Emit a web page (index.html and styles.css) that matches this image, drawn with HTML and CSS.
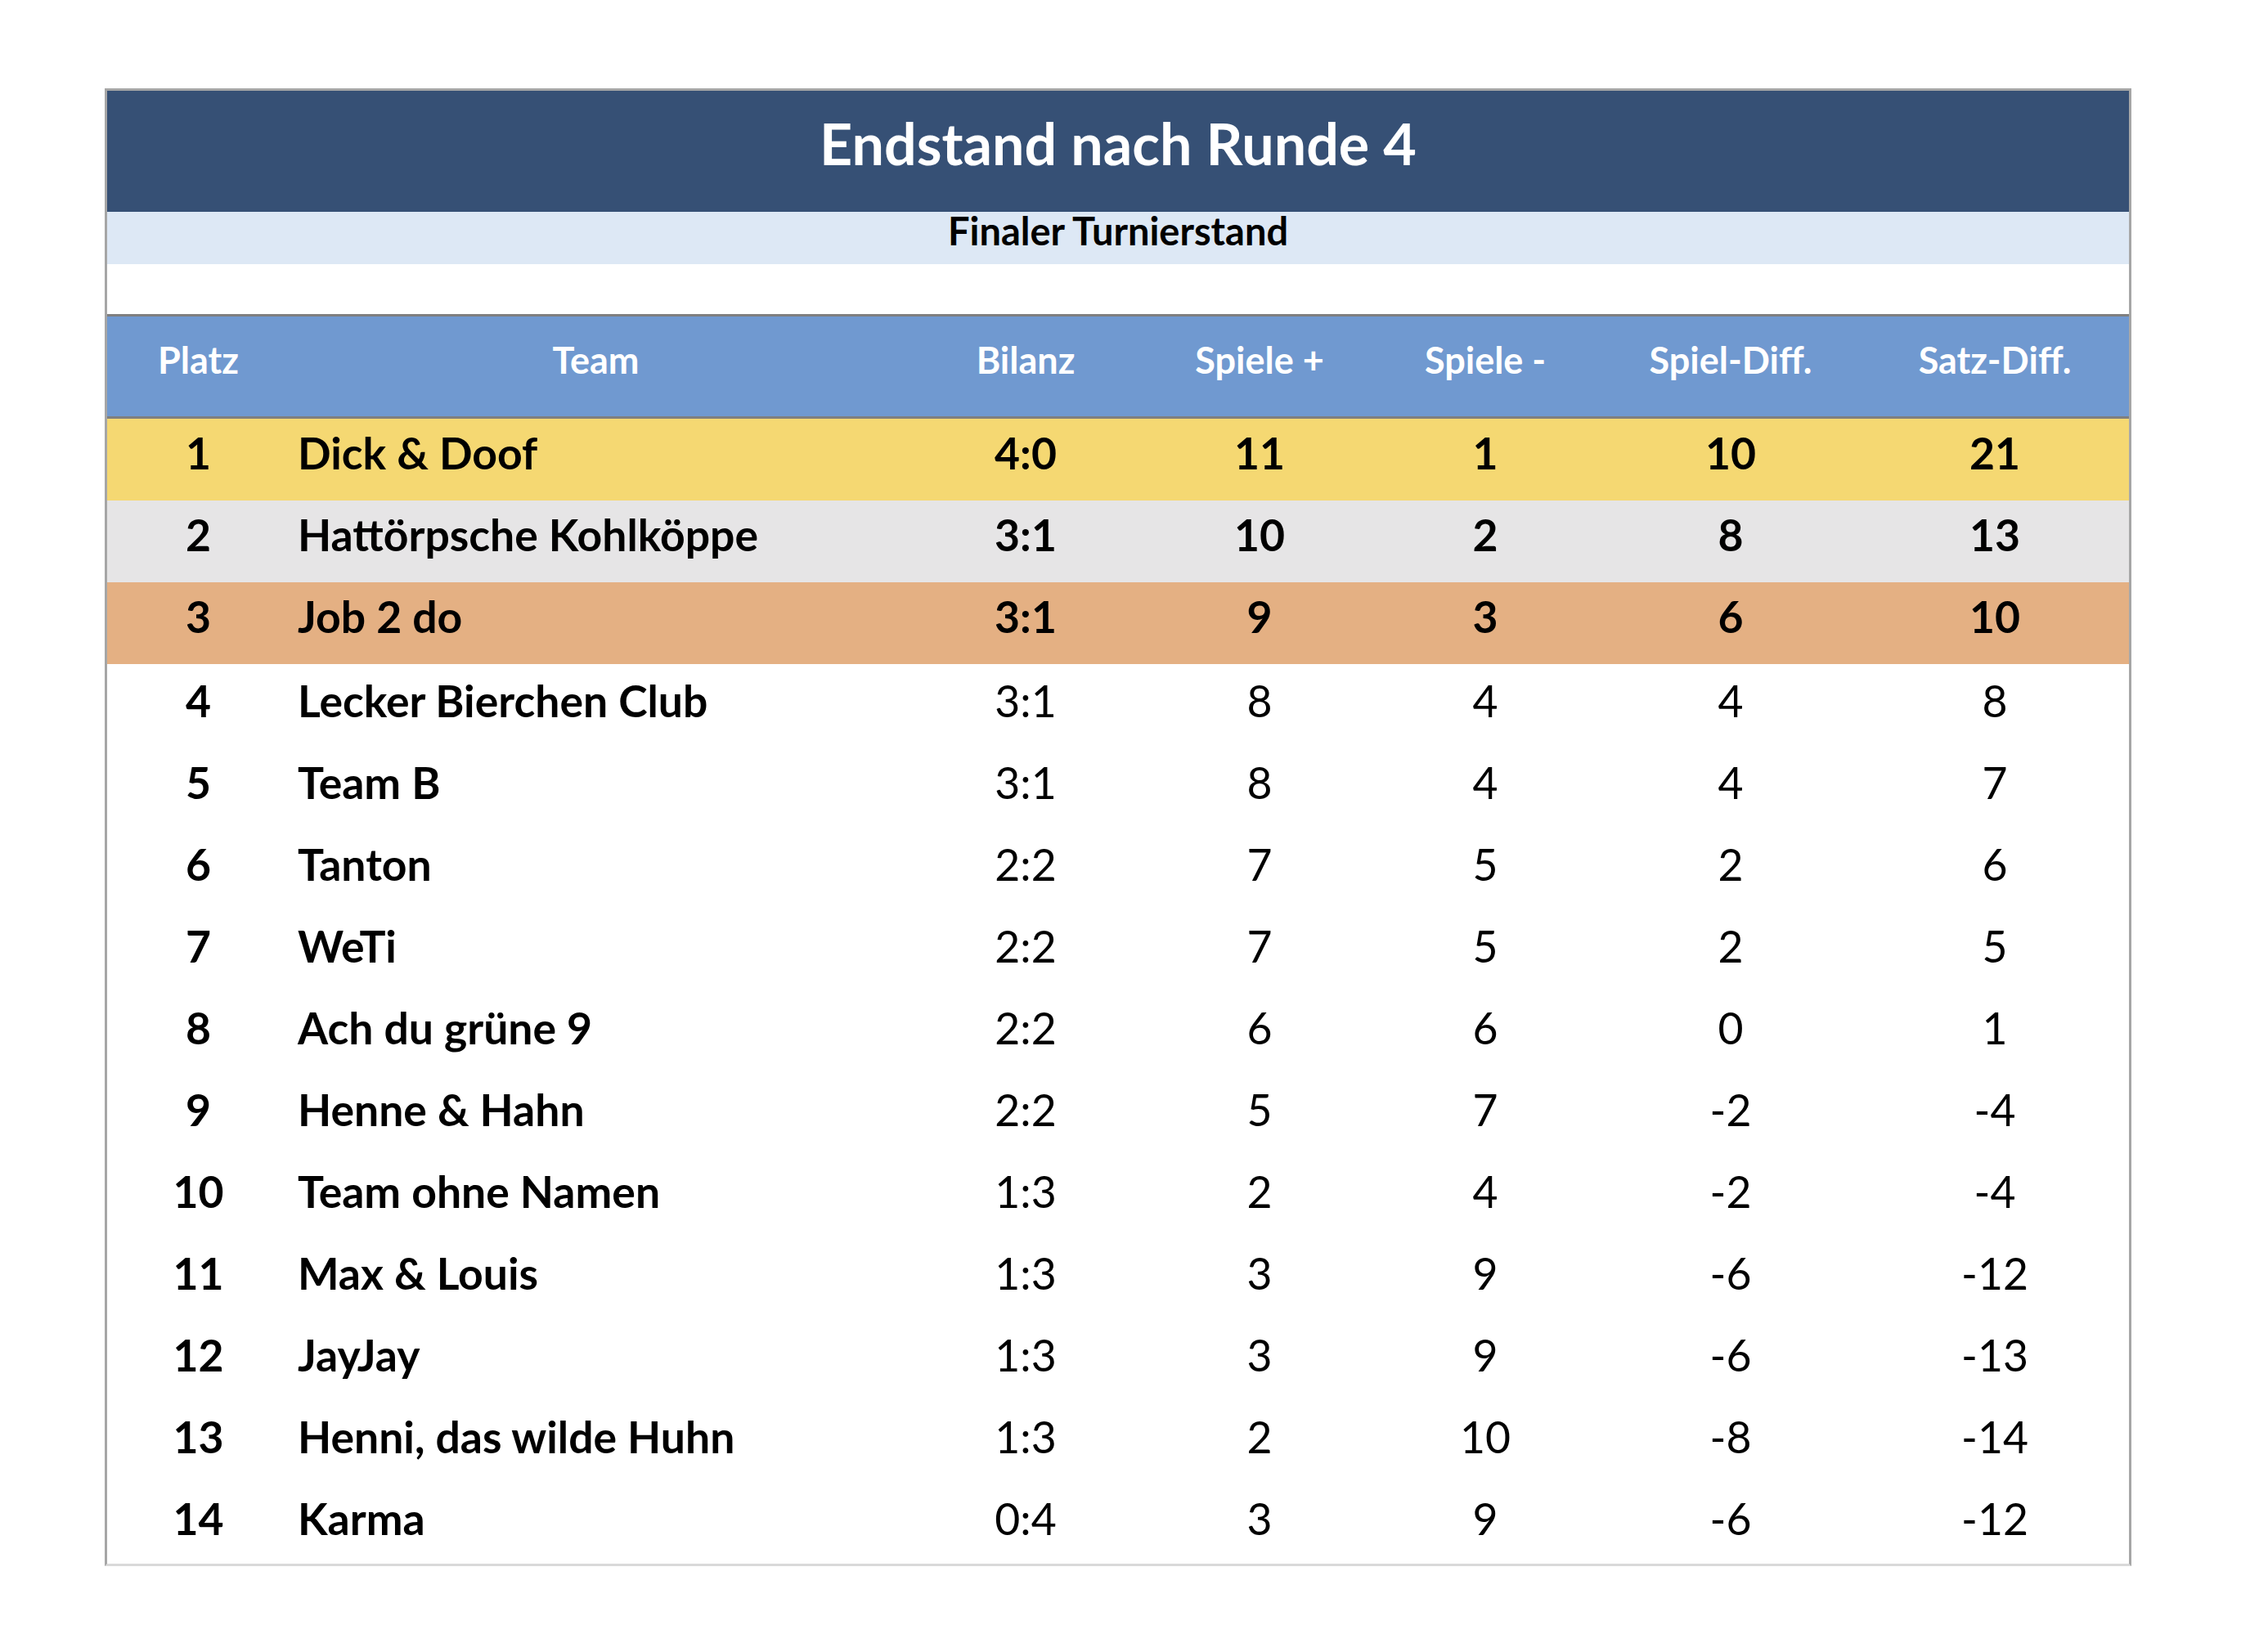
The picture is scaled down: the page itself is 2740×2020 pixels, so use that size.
FILE: index.html
```html
<!DOCTYPE html>
<html lang="de">
<head>
<meta charset="utf-8">
<title>Endstand nach Runde 4</title>
<link rel="stylesheet" href="styles.css">
</head>
<body>
<div class="sheet">
  <div class="title">Endstand nach Runde 4</div>
  <div class="subtitle">Finaler Turnierstand</div>
  <div class="spacer"></div>
  <div class="head row-grid">
    <div class="c">Platz</div>
    <div class="c">Team</div>
    <div class="c">Bilanz</div>
    <div class="c">Spiele +</div>
    <div class="c">Spiele -</div>
    <div class="c">Spiel-Diff.</div>
    <div class="c">Satz-Diff.</div>
  </div>
  <div class="body">
    <div class="row row-grid podium gold"><div class="c">1</div><div class="c team">Dick &amp; Doof</div><div class="c num">4:0</div><div class="c num">11</div><div class="c num">1</div><div class="c num">10</div><div class="c num">21</div></div>
    <div class="row row-grid podium silver"><div class="c">2</div><div class="c team">Hattörpsche Kohlköppe</div><div class="c num">3:1</div><div class="c num">10</div><div class="c num">2</div><div class="c num">8</div><div class="c num">13</div></div>
    <div class="row row-grid podium bronze"><div class="c">3</div><div class="c team">Job 2 do</div><div class="c num">3:1</div><div class="c num">9</div><div class="c num">3</div><div class="c num">6</div><div class="c num">10</div></div>
    <div class="row row-grid"><div class="c">4</div><div class="c team">Lecker Bierchen Club</div><div class="c num">3:1</div><div class="c num">8</div><div class="c num">4</div><div class="c num">4</div><div class="c num">8</div></div>
    <div class="row row-grid"><div class="c">5</div><div class="c team">Team B</div><div class="c num">3:1</div><div class="c num">8</div><div class="c num">4</div><div class="c num">4</div><div class="c num">7</div></div>
    <div class="row row-grid"><div class="c">6</div><div class="c team">Tanton</div><div class="c num">2:2</div><div class="c num">7</div><div class="c num">5</div><div class="c num">2</div><div class="c num">6</div></div>
    <div class="row row-grid"><div class="c">7</div><div class="c team">WeTi</div><div class="c num">2:2</div><div class="c num">7</div><div class="c num">5</div><div class="c num">2</div><div class="c num">5</div></div>
    <div class="row row-grid"><div class="c">8</div><div class="c team">Ach du grüne 9</div><div class="c num">2:2</div><div class="c num">6</div><div class="c num">6</div><div class="c num">0</div><div class="c num">1</div></div>
    <div class="row row-grid"><div class="c">9</div><div class="c team">Henne &amp; Hahn</div><div class="c num">2:2</div><div class="c num">5</div><div class="c num">7</div><div class="c num">-2</div><div class="c num">-4</div></div>
    <div class="row row-grid"><div class="c">10</div><div class="c team">Team ohne Namen</div><div class="c num">1:3</div><div class="c num">2</div><div class="c num">4</div><div class="c num">-2</div><div class="c num">-4</div></div>
    <div class="row row-grid"><div class="c">11</div><div class="c team">Max &amp; Louis</div><div class="c num">1:3</div><div class="c num">3</div><div class="c num">9</div><div class="c num">-6</div><div class="c num">-12</div></div>
    <div class="row row-grid"><div class="c">12</div><div class="c team">JayJay</div><div class="c num">1:3</div><div class="c num">3</div><div class="c num">9</div><div class="c num">-6</div><div class="c num">-13</div></div>
    <div class="row row-grid"><div class="c">13</div><div class="c team">Henni, das wilde Huhn</div><div class="c num">1:3</div><div class="c num">2</div><div class="c num">10</div><div class="c num">-8</div><div class="c num">-14</div></div>
    <div class="row row-grid"><div class="c">14</div><div class="c team">Karma</div><div class="c num">0:4</div><div class="c num">3</div><div class="c num">9</div><div class="c num">-6</div><div class="c num">-12</div></div>
  </div>
</div>
</body>
</html>
```
FILE: styles.css
```css
html, body {
  margin: 0;
  padding: 0;
  background: #ffffff;
}

body {
  font-family: Lato, "Open Sans", "Liberation Sans", sans-serif;
  color: #000000;
  padding: 108px 0 0 128px;
}

.sheet {
  width: 2472px;
  border-top: 3px solid #a6a6a6;
  border-left: 3px solid #a6a6a6;
  border-right: 3px solid #a6a6a6;
  border-bottom: 3px solid #d9d9d9;
}

.title {
  background: #365075;
  color: #ffffff;
  font-weight: 700;
  font-size: 70px;
  line-height: 84px;
  height: 84px;
  padding: 22px 0 42px;
  text-align: center;
}

.subtitle {
  background: #dde8f5;
  font-weight: 700;
  font-size: 47px;
  line-height: 47px;
  height: 47px;
  padding: 0 0 17px;
  text-align: center;
}

.spacer {
  height: 61px;
  background: #ffffff;
}

.row-grid {
  display: grid;
  grid-template-columns: 223px 749px 302px 270px 282px 318px 328px;
}

.head {
  background: #7099d0;
  color: #ffffff;
  font-weight: 700;
  font-size: 45px;
  line-height: 54px;
  border-top: 3px solid #7f7f7f;
  border-bottom: 3px solid #7f7f7f;
}

.head .c {
  text-align: center;
  height: 54px;
  padding: 26px 0 42px;
  white-space: nowrap;
}

.row {
  height: 100px;
  font-size: 53.5px;
  line-height: 89px;
  font-weight: 700;
}

.row .c {
  text-align: center;
  white-space: nowrap;
}

.row .team {
  text-align: left;
  padding-left: 10px;
}

.row .num {
  font-weight: 400;
}

.podium {
  line-height: 82px;
}

.podium .num {
  font-weight: 700;
}

.gold {
  background: #f5d872;
}

.silver {
  background: #e6e5e6;
}

.bronze {
  background: #e4b083;
}
```
